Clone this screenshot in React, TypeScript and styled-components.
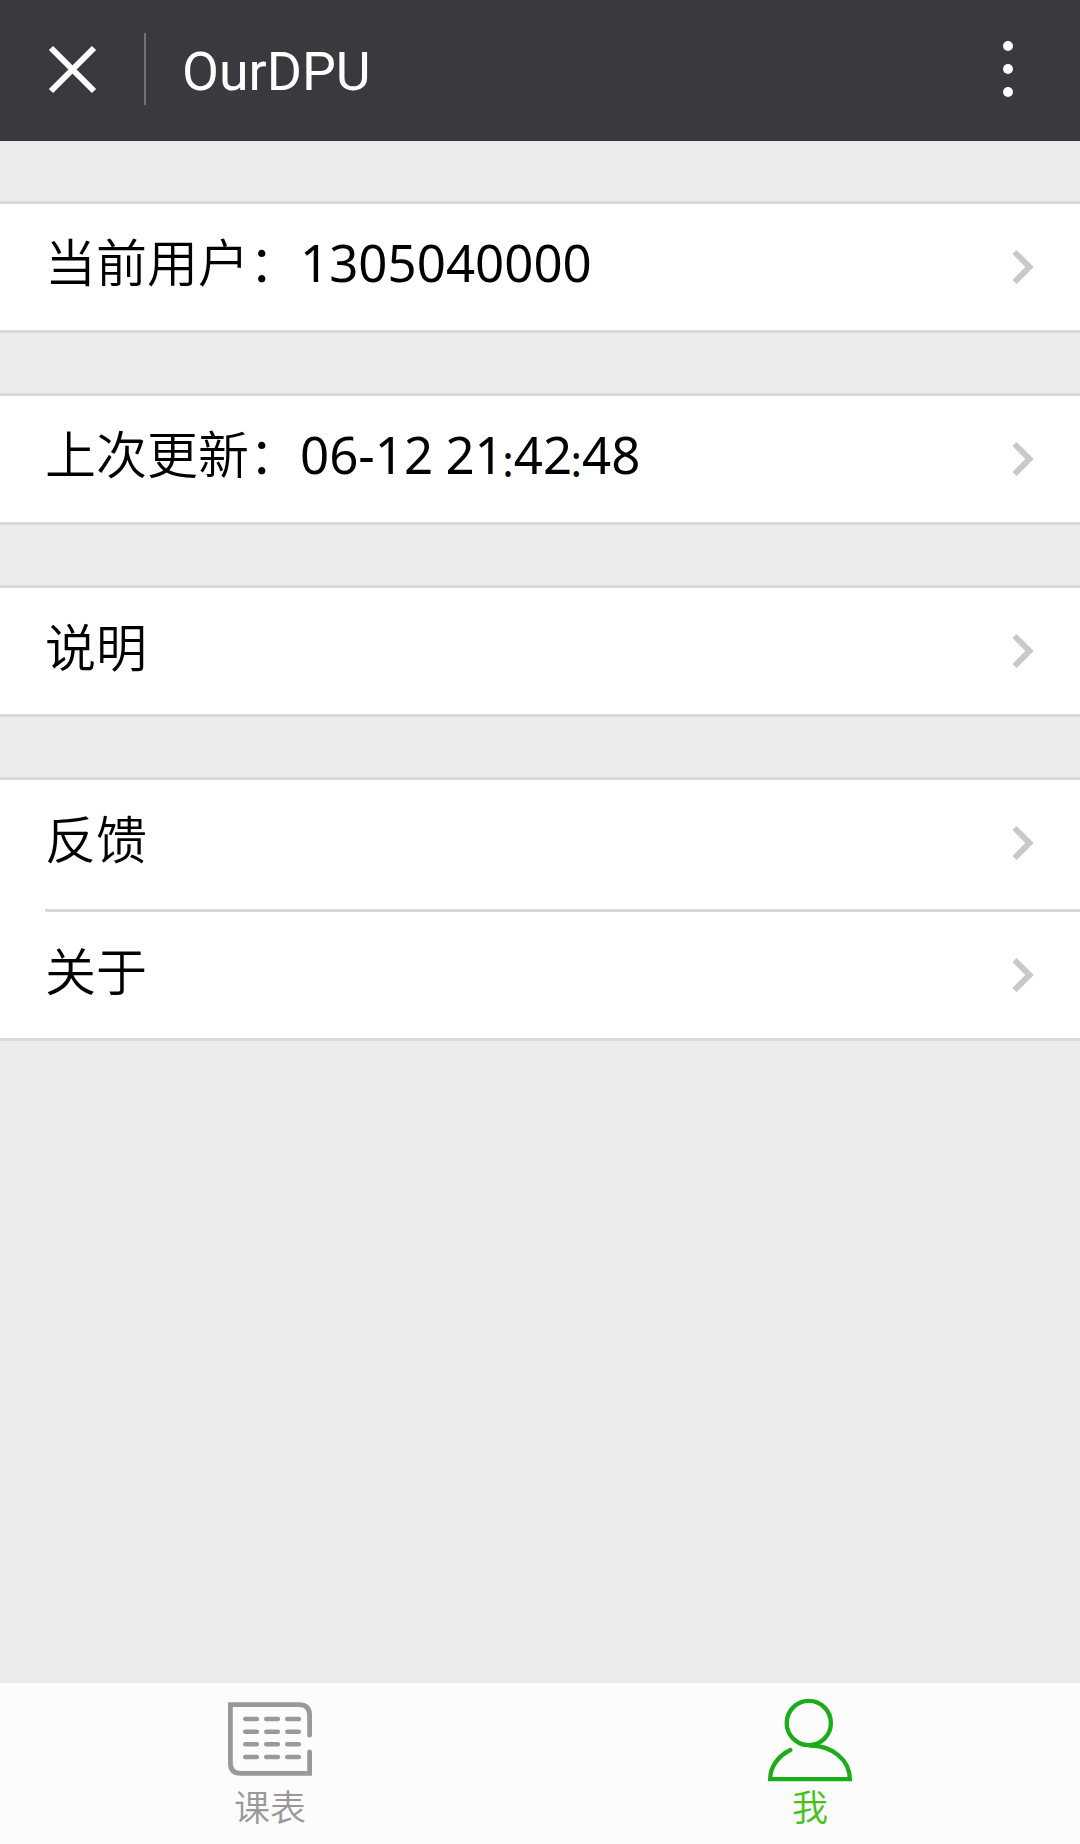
import React from "react";
import styled, { createGlobalStyle } from "styled-components";

const GlobalStyle = createGlobalStyle`
  * { box-sizing: border-box; }
  body {
    margin: 0;
    background: #ebebeb;
    font-family: "Noto Sans", "Noto Sans CJK SC", sans-serif;
  }
`;

const Page = styled.div`
  display: flex;
  flex-direction: column;
  height: 1844px;
  background: #ebebeb;
  overflow: hidden;
`;

const Header = styled.header`
  display: flex;
  align-items: center;
  flex: none;
  height: 141px;
  padding: 0 67px 2px 48px;
  background: #393a3e;
  border-bottom: 1px solid #36353a;
`;

const HeaderDivider = styled.div`
  width: 2px;
  height: 72px;
  margin-left: 47px;
  background: #737477;
`;

const Title = styled.h1`
  flex: 1;
  margin: 6px 0 0 36px;
  color: #fff;
  font: 400 53.7px/64px Roboto, sans-serif;
`;

const Content = styled.main`
  display: flex;
  flex-direction: column;
  flex: 1;
  gap: 60px;
  padding-top: 60px;
`;

const Group = styled.section`
  background: #fff;
  border-top: 3px solid #d9d9d9;
  border-bottom: 3px solid #d9d9d9;
`;

const Row = styled.div`
  display: flex;
  align-items: center;
  justify-content: space-between;
  height: 126px;
  padding: 0 45px;
  color: #000;

  & + & {
    height: 129px;
    margin-left: 45px;
    padding-left: 0;
    border-top: 3px solid #d9d9d9;
  }

  &:not(:last-child) {
    height: 129px;
    padding-bottom: 3px;
  }
`;

const Label = styled.span`
  margin-top: -13px;
  font-family: "Noto Sans CJK SC", sans-serif;
  font-size: 51px;
  font-weight: 350;
  line-height: 72px;
  white-space: pre;
`;

const Value = styled.span`
  font-family: "Noto Sans", sans-serif;
  font-weight: 400;
  word-spacing: -1px;
`;

const Colon = styled.span`
  position: relative;
  top: 3px;
  left: -1.5px;
  display: inline-block;
  width: 10px;
  font-size: 43px;
  line-height: 1;
`;

const TabBar = styled.nav`
  display: flex;
  flex: none;
  height: 161px;
  background: #fcfcfc;
`;

const Tab = styled.div<{ $color: string }>`
  display: flex;
  flex: 1;
  flex-direction: column;
  align-items: center;
  padding-top: 15px;
  color: ${(p) => p.$color};
  font-size: 36px;
  font-weight: 350;
  font-family: "Noto Sans CJK SC", sans-serif;
  line-height: 46px;
`;

const Chevron = () => (
  <svg width="24" height="36" viewBox="0 0 24 36" fill="none" stroke="#c8c8cd" strokeWidth="6">
    <path d="M3.500 3 18.500 18 3.500 33" />
  </svg>
);

const CloseIcon = () => (
  <svg width="49" height="50" viewBox="0 0 49 50" stroke="#fff" strokeWidth="6">
    <path d="M3 4 46 47M46 4 3 47" />
  </svg>
);

const MoreIcon = () => (
  <svg width="10" height="56" viewBox="0 0 10 56" fill="#fff">
    <circle cx="5" cy="5" r="5" />
    <circle cx="5" cy="28" r="5" />
    <circle cx="5" cy="51" r="5" />
  </svg>
);

const ScheduleIcon = () => (
  <svg width="84" height="84" viewBox="0 0 84 84" fill="none" stroke="currentColor" strokeLinecap="round">
    <path d="M81.600 37.300V17Q81.600 6.700 71 6.700H2.400V65Q2.400 75.300 12.500 75.300H81.600V54" strokeWidth="4.800" />
    {[21, 33.7, 46.3, 59].map((y) => (
      <path key={y} d={`M17.300 ${y}h11.500M38.300 ${y}h11.500M59.300 ${y}h11.500`} strokeWidth="4.600" />
    ))}
  </svg>
);

const PersonIcon = () => (
  <svg width="84" height="84" viewBox="0 0 84 84" fill="none" stroke="#1aad19" strokeWidth="4.300" strokeLinecap="round">
    <circle cx="40.800" cy="25" r="22.100" />
    <path d="M22.300 52C10 58 2.150 69 2.150 81.200H81.850C81.850 62 64 47.500 42 47.500" />
  </svg>
);

const Time = ({ value }: { value: string }) => (
  <>
    {value.split(":").map((part, i) => (
      <React.Fragment key={i}>
        {i > 0 && <Colon>:</Colon>}
        {part}
      </React.Fragment>
    ))}
  </>
);

const groups: React.ReactNode[][] = [
  [<>当前用户：<Value>1305040000</Value></>],
  [<>上次更新：<Value><Time value="06-12 21:42:48" /></Value></>],
  ["说明"],
  ["反馈", "关于"],
];

export default function App() {
  return (
    <>
      <GlobalStyle />
      <Page>
        <Header>
          <CloseIcon />
          <HeaderDivider />
          <Title>OurDPU</Title>
          <MoreIcon />
        </Header>
        <Content>
          {groups.map((rows, g) => (
            <Group key={g}>
              {rows.map((label, r) => (
                <Row key={r}>
                  <Label>{label}</Label>
                  <Chevron />
                </Row>
              ))}
            </Group>
          ))}
        </Content>
        <TabBar>
          <Tab $color="#999999">
            <ScheduleIcon />
            课表
          </Tab>
          <Tab $color="#46c11b">
            <PersonIcon />
            我
          </Tab>
        </TabBar>
      </Page>
    </>
  );
}
